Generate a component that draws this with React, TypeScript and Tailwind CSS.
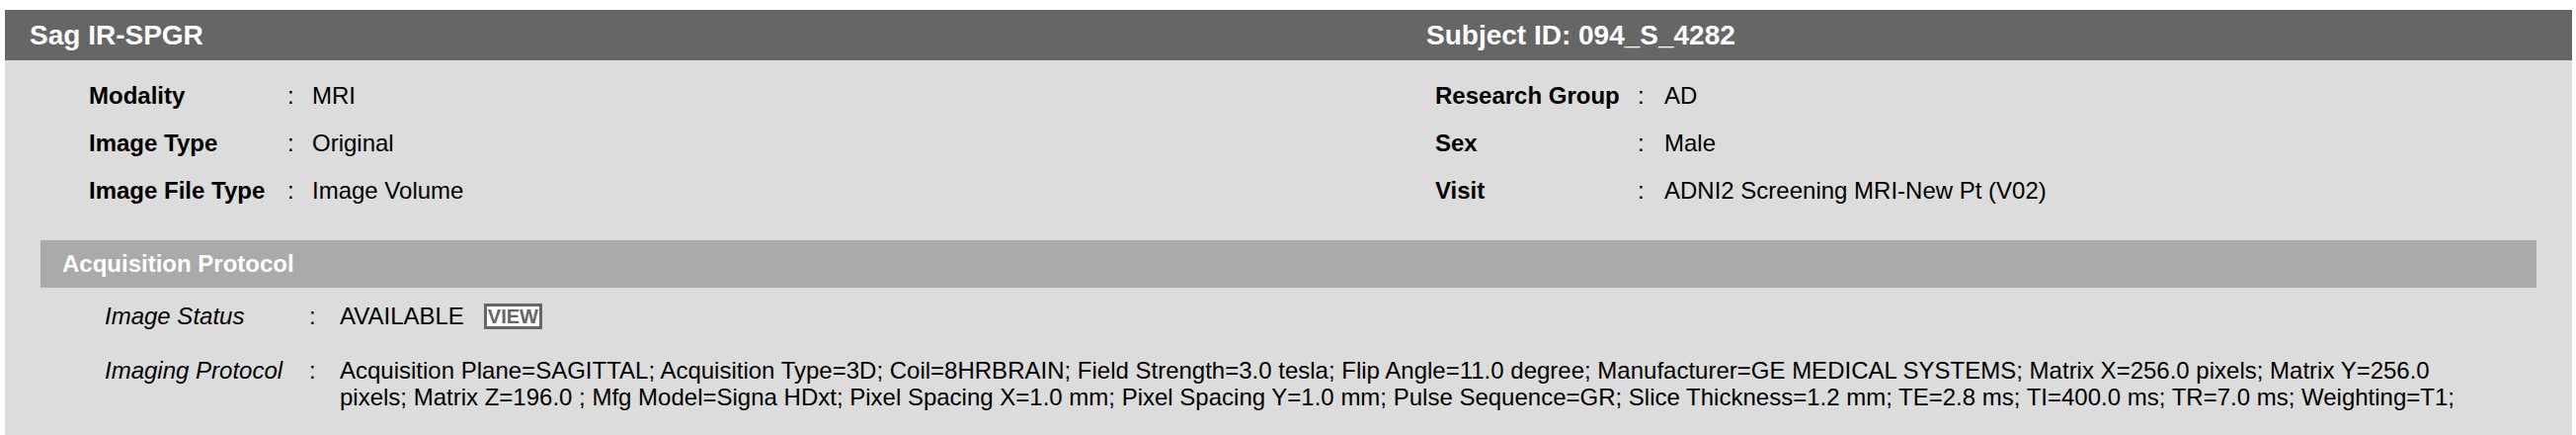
export default function App() {
  const left = [
    ["Modality", "MRI"],
    ["Image Type", "Original"],
    ["Image File Type", "Image Volume"],
  ];
  const right = [
    ["Research Group", "AD"],
    ["Sex", "Male"],
    ["Visit", "ADNI2 Screening MRI-New Pt (V02)"],
  ];
  return (
    <div className="bg-white pt-[10px] pl-[5px] pr-[4px] h-[440px] overflow-hidden" style={{ fontFamily: '"Liberation Sans", Arial, sans-serif' }}>
      <div className="bg-[#dcdcdc] h-[430px]">
        <div className="h-[51px] bg-[#666666] flex items-center pl-[25px] text-white font-bold text-[28px] leading-none">
          <div className="w-[1414px]">Sag IR-SPGR</div>
          <div>Subject ID: 094_S_4282</div>
        </div>
        <div className="flex pt-[12px] text-[24px] text-black">
          <div className="w-[1448px] pl-[85px] grid grid-cols-[201px_25px_1fr] content-start">
            {left.map(([l, v]) => (
              <div key={l} className="contents">
                <div className="h-[48px] flex items-center font-bold">{l}</div>
                <div className="h-[48px] flex items-center">:</div>
                <div className="h-[48px] flex items-center">{v}</div>
              </div>
            ))}
          </div>
          <div className="grid grid-cols-[205px_27px_1fr] content-start">
            {right.map(([l, v]) => (
              <div key={l} className="contents">
                <div className="h-[48px] flex items-center font-bold">{l}</div>
                <div className="h-[48px] flex items-center">:</div>
                <div className="h-[48px] flex items-center">{v}</div>
              </div>
            ))}
          </div>
        </div>
        <div className="mt-[26px] mx-[36px] h-[48px] bg-[#aaaaaa] flex items-center pl-[22px] text-white font-bold text-[24px]">
          Acquisition Protocol
        </div>
        <div className="ml-[101px] mr-[84px] text-[24px] text-black">
          <div className="h-[58px] flex items-center">
            <div className="w-[207px] italic">Image Status</div>
            <div className="w-[31px]">:</div>
            <div className="flex items-center">
              <span>AVAILABLE</span>
              <span className="ml-[20px] h-[26px] px-[1px] border-[3px] border-[#666666] bg-white text-[#666666] font-bold text-[20px] leading-[20px] flex items-center">VIEW</span>
            </div>
          </div>
          <div className="flex mt-[12px] leading-[27px]">
            <div className="w-[207px] shrink-0 italic">Imaging Protocol</div>
            <div className="w-[31px] shrink-0">:</div>
            <div className="flex-1">
              Acquisition Plane=SAGITTAL; Acquisition Type=3D; Coil=8HRBRAIN; Field Strength=3.0 tesla; Flip Angle=11.0 degree; Manufacturer=GE MEDICAL SYSTEMS; Matrix X=256.0 pixels; Matrix Y=256.0 pixels; Matrix Z=196.0 ; Mfg Model=Signa HDxt; Pixel Spacing X=1.0 mm; Pixel Spacing Y=1.0 mm; Pulse Sequence=GR; Slice Thickness=1.2 mm; TE=2.8 ms; TI=400.0 ms; TR=7.0 ms; Weighting=T1;
            </div>
          </div>
        </div>
      </div>
    </div>
  );
}
